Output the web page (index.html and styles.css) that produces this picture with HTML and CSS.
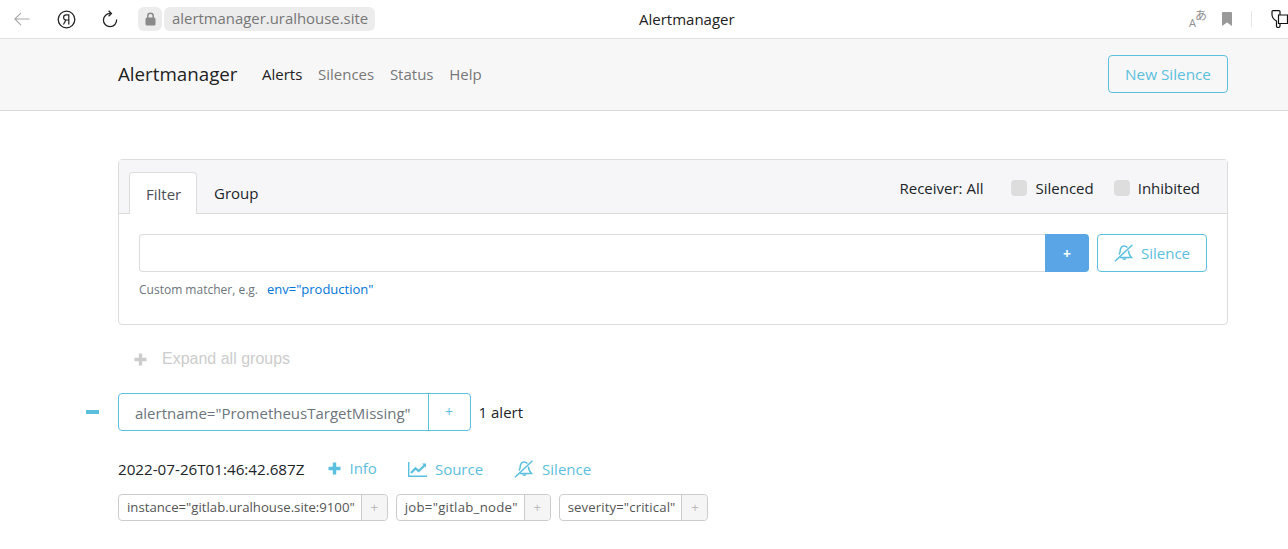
FILE: index.html
```html
<!DOCTYPE html>
<html lang="en">
<head>
  <meta charset="UTF-8" />
  <title>Alertmanager</title>
  <link rel="stylesheet" href="styles.css">
</head>
<body>
  <div class="browser-bar">
    <div class="browser-left">
      <svg class="bicon back" width="16" height="14" viewBox="0 0 16 14"><path d="M15.5 7H1M7 .8 .9 7 7 13.2" fill="none" stroke="#a8a8a8" stroke-width="1.1"/></svg>
      <svg class="bicon ya" width="19" height="19" viewBox="0 0 19 19"><circle cx="9.5" cy="9.5" r="8.3" fill="none" stroke="#222" stroke-width="1.3"/><path d="M11.8 14.5V4.8H9.3C7.6 4.8 6.6 5.8 6.6 7.5S7.6 10 9.3 10H11.8M9 10 6.4 14.5" fill="none" stroke="#222" stroke-width="1.2"/></svg>
      <svg class="bicon reload" width="18" height="18" viewBox="0 0 18 18"><path d="M9.6 3.5A6.6 6.6 0 1 0 15.6 9.5" fill="none" stroke="#222" stroke-width="1.3"/><path d="M7.6.8 10.4 3.5 7.6 6.2" fill="none" stroke="#222" stroke-width="1.3"/></svg>
      <span class="lock">
        <svg width="11" height="14" viewBox="0 0 11 14"><path d="M2.8 6V4a2.7 2.7 0 0 1 5.4 0V6" fill="none" stroke="#8a8a8a" stroke-width="1.5"/><rect x=".5" y="5.5" width="10" height="8" rx="1.5" fill="#8a8a8a"/></svg>
      </span>
      <span class="url">alertmanager.uralhouse.site</span>
    </div>
    <div class="browser-title">Alertmanager</div>
    <div class="browser-right">
      <span class="translate"><span class="tr-a">A</span><span class="tr-b">あ</span></span>
      <svg class="bookmark" width="10" height="14" viewBox="0 0 10 14"><path d="M0 1Q0 0 1 0H9Q10 0 10 1V14L5 10.5 0 14Z" fill="#999"/></svg>
      <span class="bar-sep"></span>
      <svg class="ext" width="18" height="18" viewBox="0 0 18 18"><path d="M1 1.5Q1 .6 2 .6H8Q9 .6 9 1.5V5H16.5V13.5H9V16Q9 17.5 7 17.5 5.5 17.5 5.5 16V11Q1.5 9 1 5Z M9 5H7.5V13.5H9" fill="#fff" stroke="#111" stroke-width="1.2"/></svg>
    </div>
  </div>

  <nav class="navbar">
    <div class="wrap nav-row">
      <span class="brand">Alertmanager</span>
      <a class="nav-link active">Alerts</a>
      <a class="nav-link">Silences</a>
      <a class="nav-link">Status</a>
      <a class="nav-link">Help</a>
      <button class="btn new-silence">New Silence</button>
    </div>
  </nav>

  <main class="wrap content">
    <section class="card">
      <div class="card-header">
        <div class="tabs">
          <span class="tab active">Filter</span>
          <span class="tab">Group</span>
        </div>
        <div class="filters">
          <span class="receiver">Receiver: All</span>
          <label class="check"><span class="box"></span>Silenced</label>
          <label class="check"><span class="box"></span>Inhibited</label>
        </div>
      </div>
      <div class="card-body">
        <div class="filter-row">
          <input class="matcher" type="text" />
          <button class="add">+</button>
          <button class="btn silence-btn">
            <svg class="bell" width="20" height="18" viewBox="0 0 20 18"><use href="#bell-slash"/></svg>Silence
          </button>
        </div>
        <p class="hint">Custom matcher, e.g.<a class="example">env="production"</a></p>
      </div>
    </section>

    <div class="expand">
      <svg width="13" height="13" viewBox="0 0 13 13"><path d="M6.5 .5V12.5M.5 6.5H12.5" stroke="#ccc" stroke-width="3.4"/></svg>
      <span>Expand all groups</span>
    </div>

    <div class="group">
      <span class="collapse"></span>
      <div class="group-label">
        <span class="group-name">alertname="PrometheusTargetMissing"</span>
        <span class="group-add">+</span>
      </div>
      <span class="count">1 alert</span>
    </div>

    <div class="alert-row">
      <span class="stamp">2022-07-26T01:46:42.687Z</span>
      <a class="action info">
        <svg width="13" height="13" viewBox="0 0 13 13"><path d="M6.5 .5V12.5M.5 6.5H12.5" stroke="#5bc0de" stroke-width="3.4"/></svg>Info
      </a>
      <a class="action source">
        <svg width="19" height="15" viewBox="0 0 19 15"><path d="M.7 0V14.3H19" fill="none" stroke="#5bc0de" stroke-width="1.4"/><path d="M3 11 7.5 6.3 10.7 9 17.5 2.5" fill="none" stroke="#5bc0de" stroke-width="2.2"/><path d="M14 1.5H18V5.5Z" fill="#5bc0de"/></svg>Source
      </a>
      <a class="action">
        <svg class="bell" width="20" height="18" viewBox="0 0 20 18"><use href="#bell-slash"/></svg>Silence
      </a>
    </div>

    <div class="labels">
      <div class="label"><span class="label-text">instance="gitlab.uralhouse.site:9100"</span><span class="label-add">+</span></div>
      <div class="label"><span class="label-text job">job="gitlab_node"</span><span class="label-add">+</span></div>
      <div class="label"><span class="label-text severity">severity="critical"</span><span class="label-add">+</span></div>
    </div>
  </main>

  <svg class="defs" width="0" height="0">
    <symbol id="bell-slash" viewBox="0 0 20 18">
      <path d="M18.5 .8 1 17.2" fill="none" stroke="#5bc0de" stroke-width="1.5"/>
      <path d="M5 10.5C6.5 8.5 6 6.5 6.5 5 7.2 3 9 2 10 2 11.5 2 12.5 2.5 13.5 3.5M14.5 6.5C14.5 9 15.5 11.5 17.5 13.5H5.5" fill="none" stroke="#5bc0de" stroke-width="1.5"/>
      <path d="M8 14.2A2.3 2.3 0 0 0 12.5 14.2Z" fill="#5bc0de"/>
    </symbol>
  </svg>
</body>
</html>
```

FILE: styles.css
```css
* {
  box-sizing: border-box;
}

body {
  margin: 0;
  font-family: 'Open Sans', sans-serif;
  font-size: 15px;
  color: #212529;
  background: white;
  overflow: hidden;
}

.defs {
  position: absolute;
}

/* browser chrome */
.browser-bar {
  display: flex;
  align-items: center;
  height: 39px;
  border-bottom: 1px solid #dedede;
}

.browser-left {
  display: flex;
  align-items: center;
  width: 639px;
  padding-left: 14px;
}

.back {
  margin-right: 27px;
}

.ya {
  margin-right: 25px;
}

.reload {
  margin-right: 19px;
}

.lock {
  display: flex;
  align-items: center;
  justify-content: center;
  width: 24px;
  height: 24px;
  margin-right: 2px;
  background: #ececec;
  border-radius: 6px;
}

.url {
  width: 211px;
  height: 24px;
  padding-left: 8px;
  line-height: 23px;
  font-size: 14.9px;
  white-space: nowrap;
  color: #777;
  background: #ececec;
  border-radius: 6px;
}

.browser-title {
  width: 120px;
  font-size: 15px;
  color: #222;
}

.browser-right {
  display: flex;
  align-items: center;
  flex: 1;
  justify-content: flex-end;
}

.translate {
  position: relative;
  width: 17px;
  height: 16px;
  margin-right: 16px;
  color: #8f8f8f;
}

.tr-a {
  position: absolute;
  left: 0;
  bottom: -3px;
  font-size: 11px;
}

.tr-b {
  position: absolute;
  right: -1px;
  top: -5px;
  font-family: 'Noto Sans CJK JP', sans-serif;
  font-size: 12px;
}

.bookmark {
  margin-right: 19px;
}

.bar-sep {
  width: 1px;
  height: 16px;
  margin-right: 19px;
  background: #e4e4e4;
}

.ext {
  margin-right: -1px;
}

/* navbar */
.wrap {
  width: 1110px;
  margin-left: 118px;
}

.navbar {
  height: 72px;
  background: #f7f7f7;
  border-bottom: 1px solid #d9d9d9;
}

.nav-row {
  display: flex;
  align-items: center;
  height: 69px;
}

.brand {
  width: 120px;
  margin-right: 24px;
  font-size: 18.75px;
  white-space: nowrap;
  color: #222;
}

.nav-link {
  margin-right: 15.7px;
  color: #777;
}

.nav-link.active {
  color: #222;
}

.btn {
  font-family: inherit;
  font-size: 15px;
  color: #5bc0de;
  background: transparent;
  border: 1px solid #5bc0de;
  border-radius: 4px;
}

.new-silence {
  width: 120px;
  height: 38px;
  margin-left: auto;
  font-size: 15.3px;
}

/* filter card */
.content {
  padding-top: 48px;
}

.card {
  height: 166px;
  border: 1px solid #dcdcdc;
  border-radius: 4px;
}

.card-header {
  display: flex;
  justify-content: space-between;
  height: 54px;
  padding: 12px 27px 0 10px;
  background: #f6f6f8;
  border-bottom: 1px solid #dcdcdc;
}

.tabs {
  display: flex;
}

.tab {
  height: 42px;
  padding: 0 17px;
  line-height: 42px;
  color: #212529;
}

.tab.active {
  width: 68px;
  padding: 0 0 0 16px;
  color: #495057;
  background: white;
  border: 1px solid #dcdcdc;
  border-bottom: none;
  border-radius: 4px 4px 0 0;
}

.filters {
  display: flex;
  align-items: center;
  height: 32px;
}

.receiver {
  margin-right: 28px;
}

.check {
  display: flex;
  align-items: center;
  margin-left: 20px;
}

.receiver + .check {
  margin-left: 0;
}

.box {
  width: 16px;
  height: 16px;
  margin-right: 8px;
  background: #dddddd;
  border-radius: 4px;
}

.card-body {
  padding: 20px 20px 0;
}

.filter-row {
  display: flex;
  height: 38px;
}

.matcher {
  flex: 1;
  border: 1px solid #dcdcdc;
  border-right: none;
  border-radius: 4px 0 0 4px;
}

.add {
  width: 44px;
  font-family: inherit;
  font-size: 14px;
  font-weight: 700;
  color: white;
  background: #5aa5e6;
  border: none;
  border-radius: 0 4px 4px 0;
}

.silence-btn {
  display: flex;
  align-items: center;
  justify-content: center;
  width: 110px;
  margin-left: 8px;
}

.bell {
  margin-right: 7px;
}

.hint {
  margin: 8px 0 0;
  font-size: 12px;
  color: #6c757d;
}

.example {
  margin-left: 9px;
  font-size: 13px;
  color: #0275d8;
}

/* groups */
.expand {
  display: flex;
  align-items: center;
  height: 18px;
  margin: 25px 0 0 16px;
  font-family: 'Liberation Sans', sans-serif;
  font-size: 16px;
  color: #ccc;
}

.expand svg {
  margin-right: 15px;
}

.group {
  position: relative;
  display: flex;
  align-items: center;
  margin-top: 25px;
}

.collapse {
  position: absolute;
  left: -32px;
  top: 17px;
  width: 13px;
  height: 4px;
  background: #5bc0de;
}

.group-label {
  display: flex;
  height: 38px;
  border: 1px solid #5bc0de;
  border-radius: 4px;
}

.group-name {
  padding: 0 17px 0 16px;
  line-height: 38px;
  color: #6c757d;
  border-right: 1px solid #5bc0de;
}

.group-add {
  width: 41px;
  line-height: 36px;
  text-align: center;
  font-size: 14px;
  color: #5bc0de;
}

.count {
  margin-left: 8px;
}

.alert-row {
  display: flex;
  align-items: center;
  margin-top: 28px;
}

.stamp {
  font-size: 15.2px;
}

.action {
  display: flex;
  align-items: center;
  margin-left: 31px;
  color: #5bc0de;
}

.action svg {
  margin-right: 8px;
}

.info {
  position: relative;
  top: -1px;
  margin-left: 24px;
}

.labels {
  display: flex;
  gap: 8px;
  margin-top: 15px;
}

.label {
  display: flex;
  height: 27px;
  font-size: 13.2px;
  border: 1px solid #ccc;
  border-radius: 4px;
}

.label-text {
  padding: 0 6px 0 8px;
  line-height: 25px;
  color: #555;
}

.label-text.job {
  letter-spacing: .26px;
}

.label-text.severity {
  letter-spacing: .1px;
}

.label-add {
  width: 26px;
  line-height: 24px;
  text-align: center;
  color: #bbb;
  background: #f5f5f5;
  border-left: 1px solid #ccc;
  border-radius: 0 4px 4px 0;
}
```
